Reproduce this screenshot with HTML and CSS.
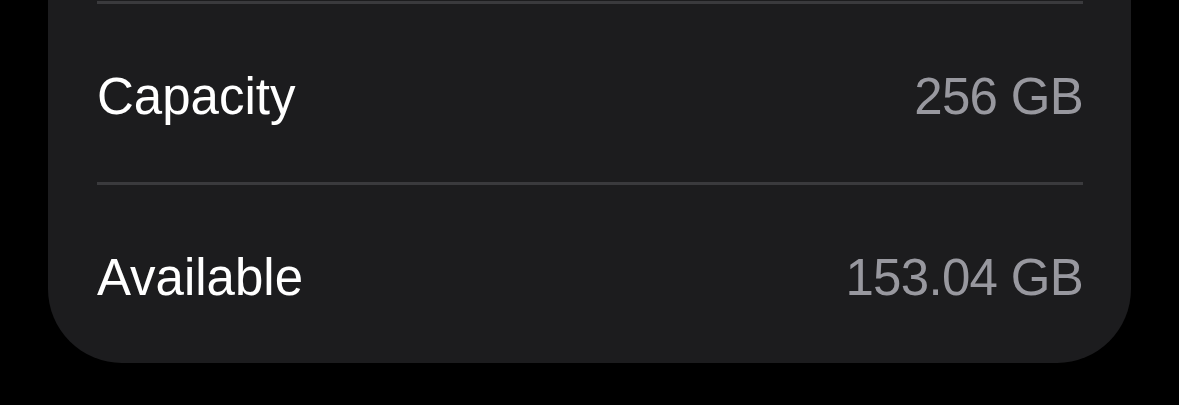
FILE: index.html
```html
<!DOCTYPE html>
<html lang="en">
<head>
<meta charset="utf-8">
<title>Storage</title>
<link rel="stylesheet" href="styles.css">
</head>
<body>
<div class="card">
  <div class="row">
    <span class="label">Capacity</span>
    <span class="value">256 GB</span>
  </div>
  <div class="row">
    <span class="label">Available</span>
    <span class="value">153.04 GB</span>
  </div>
</div>
</body>
</html>
```
FILE: styles.css
```css
html, body {
  margin: 0;
  padding: 0;
  background: #000;
}
body {
  font-family: "Liberation Sans", Arial, sans-serif;
  width: 1179px;
  height: 405px;
  overflow: hidden;
}
.card {
  margin: 1px 0 0 48px;
  width: 1083px;
  box-sizing: border-box;
  background: #1c1c1e;
  border-radius: 0 0 74px 74px;
  padding: 0 48px 0 49px;
  box-shadow: 0 -10px 0 #1c1c1e;
}
.row {
  display: flex;
  justify-content: space-between;
  align-items: center;
  border-top: 3px solid #3a3a3d;
  padding-top: 6px;
  height: 172px;
}
.label {
  color: #ffffff;
  font-size: 51px;
}
.value {
  color: #98989f;
  font-size: 51px;
  letter-spacing: -0.7px;
}
```
